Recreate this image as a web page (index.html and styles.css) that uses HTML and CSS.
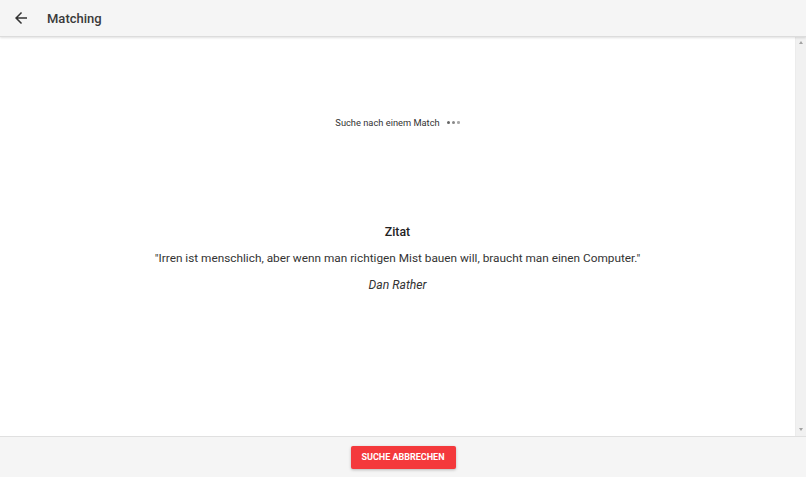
FILE: index.html
```html
<!DOCTYPE html>
<html lang="de">
<head>
<meta charset="utf-8">
<title>Matching</title>
<link rel="stylesheet" href="styles.css">
</head>
<body>
<div class="app">
  <header class="toolbar">
    <button class="back" aria-label="Zurück">
      <svg width="18" height="18" viewBox="0 0 24 24"><path d="M20 11H7.83l5.59-5.59L12 4l-8 8 8 8 1.41-1.41L7.83 13H20v-2z" fill="#333"/></svg>
    </button>
    <h1 class="title">Matching</h1>
  </header>
  <div class="body-row">
    <main class="content">
      <div class="status">
        <span>Suche nach einem Match</span>
        <span class="dots"><i></i><i></i><i></i></span>
      </div>
      <section class="quote">
        <h2 class="quote-title">Zitat</h2>
        <p class="quote-text">"Irren ist menschlich, aber wenn man richtigen Mist bauen will, braucht man einen Computer."</p>
        <p class="quote-author">Dan Rather</p>
      </section>
    </main>
    <div class="rail" aria-hidden="true">
      <span class="arrow up"></span>
      <span class="arrow down"></span>
    </div>
  </div>
  <footer class="footer">
    <button class="cancel">Suche abbrechen</button>
  </footer>
</div>
</body>
</html>
```
FILE: styles.css
```css
* { box-sizing: border-box; }
html, body { margin: 0; height: 100%; }
body {
  font-family: Roboto, "Noto Sans", Arial, sans-serif;
  color: #212121;
  background: #fff;
}
.app {
  display: flex;
  flex-direction: column;
  height: 100vh;
}
.toolbar {
  height: 37px;
  flex: 0 0 37px;
  display: flex;
  align-items: center;
  background: #f5f5f5;
  border-bottom: 1px solid #dcdcdc;
  box-shadow: 0 1px 2px rgba(0,0,0,0.12);
  position: relative;
  z-index: 1;
}
.back {
  background: none;
  border: 0;
  padding: 0;
  margin-left: 12px;
  width: 18px;
  height: 18px;
  display: flex;
}
.title {
  margin: 0 0 0 17px;
  font-size: 13px;
  font-weight: 500;
  color: #3a3a3a;
}
.body-row {
  flex: 1;
  display: flex;
  min-height: 0;
}
.content {
  flex: 1;
  display: flex;
  flex-direction: column;
  align-items: center;
}
/* scroll rail with its two arrow buttons */
.rail {
  flex: 0 0 11px;
  background: #f1f1f1;
  border-left: 1px solid #ececec;
  display: flex;
  flex-direction: column;
  justify-content: space-between;
  align-items: center;
  padding: 4px 0 5px;
}
.arrow {
  width: 0;
  height: 0;
  border-left: 2.5px solid transparent;
  border-right: 2.5px solid transparent;
}
.arrow.up { border-bottom: 3px solid #a3a3a3; }
.arrow.down { border-top: 3px solid #a3a3a3; }
.status {
  margin-top: 80px;
  font-size: 9.3px;
  color: #333;
  display: flex;
  align-items: center;
  gap: 7px;
}
.dots { display: flex; gap: 2px; align-items: center; }
.dots i {
  display: block;
  width: 3.5px;
  height: 3.5px;
  border-radius: 50%;
  background: #666;
}
.dots i:nth-child(2) { width: 3px; height: 3px; background: #888; }
.dots i:nth-child(3) { width: 2.5px; height: 2.5px; background: #aaa; }
.quote {
  margin-top: 97px;
  text-align: center;
}
.quote-title {
  margin: 0;
  font-size: 12.3px;
  font-weight: 500;
  color: #222;
}
.quote-text {
  margin: 12px 0 0;
  font-size: 11.8px;
  color: #333;
}
.quote-author {
  margin: 13px 0 0;
  font-size: 12.2px;
  font-style: italic;
  color: #333;
}
.footer {
  height: 41px;
  flex: 0 0 41px;
  background: #f5f5f5;
  border-top: 1px solid #e0e0e0;
  display: flex;
  justify-content: center;
  align-items: center;
}
.cancel {
  width: 105px;
  height: 23px;
  background: #f4393c;
  color: #fff;
  border: 0;
  border-radius: 2px;
  font-family: Roboto, Arial, sans-serif;
  font-size: 9px;
  font-weight: 700;
  text-transform: uppercase;
  box-shadow: 0 1px 3px rgba(0,0,0,0.25);
  padding: 0;
}
```
